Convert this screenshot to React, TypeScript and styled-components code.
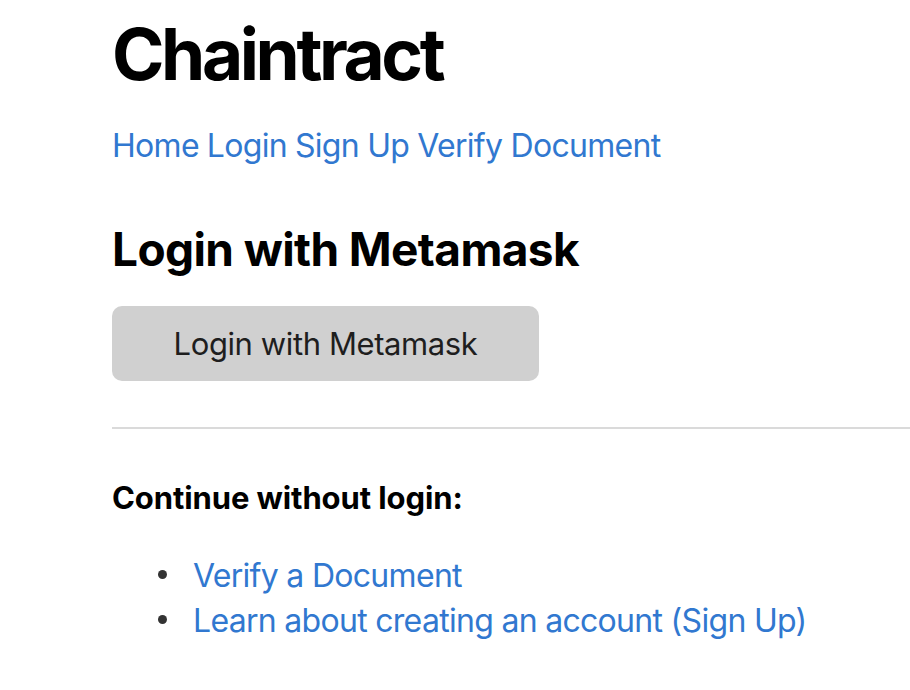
import React from "react";
import styled, { createGlobalStyle } from "styled-components";

const Global = createGlobalStyle`
  html, body { margin: 0; padding: 0; background: #ffffff; }
  body { font-family: Inter, "Noto Sans", sans-serif; color: #000; }
  * { box-sizing: border-box; }
`;

const Page = styled.div`
  padding: 0 0 40px 112px;
  overflow: hidden;
`;

const Title = styled.h1`
  margin: 11px 0 0;
  font-size: 71px;
  line-height: 86px;
  font-weight: 700;
  letter-spacing: -3.4px;
`;

const Nav = styled.nav`
  display: flex;
  gap: 8px;
  margin-top: 29px;
  font-size: 32px;
  line-height: 40px;
  letter-spacing: -0.7px;
`;

const Link = styled.a`
  color: #3178d0;
  text-decoration: none;
`;

const Heading = styled.h2`
  margin: 56px 0 0;
  font-size: 46px;
  line-height: 54px;
  font-weight: 700;
  letter-spacing: -0.6px;
`;

const Button = styled.button`
  display: flex;
  align-items: center;
  justify-content: center;
  margin-top: 30px;
  width: 427px;
  height: 75px;
  border: none;
  border-radius: 10px;
  background: #d0d0d0;
  color: #1e1e1e;
  font-family: inherit;
  font-size: 31px;
  letter-spacing: -0.4px;
`;

const Rule = styled.hr`
  margin: 46px 0 0;
  border: none;
  height: 2px;
  background: #dadada;
`;

const Sub = styled.p`
  margin: 51px 0 0;
  font-size: 31px;
  line-height: 36px;
  font-weight: 700;
  letter-spacing: -0.1px;
`;

const List = styled.ul`
  margin: 37px 0 0;
  padding-left: 46px;
  list-style: none;
  font-size: 32px;
  line-height: 45px;
  letter-spacing: -0.7px;
`;

const Item = styled.li`
  display: flex;
  align-items: center;
  &::before {
    content: "";
    width: 9px;
    height: 9px;
    border-radius: 50%;
    background: #333;
    margin-right: 26px;
    transform: translateY(-1px);
  }
`;

export default function App() {
  return (
    <>
      <Global />
      <Page>
        <Title>Chaintract</Title>
        <Nav>
          <Link href="#">Home</Link>
          <Link href="#">Login</Link>
          <Link href="#">Sign Up</Link>
          <Link href="#">Verify Document</Link>
        </Nav>
        <Heading>Login with Metamask</Heading>
        <Button>Login with Metamask</Button>
        <Rule />
        <Sub>Continue without login:</Sub>
        <List>
          <Item><Link href="#">Verify a Document</Link></Item>
          <Item><Link href="#">Learn about creating an account (Sign Up)</Link></Item>
        </List>
      </Page>
    </>
  );
}
